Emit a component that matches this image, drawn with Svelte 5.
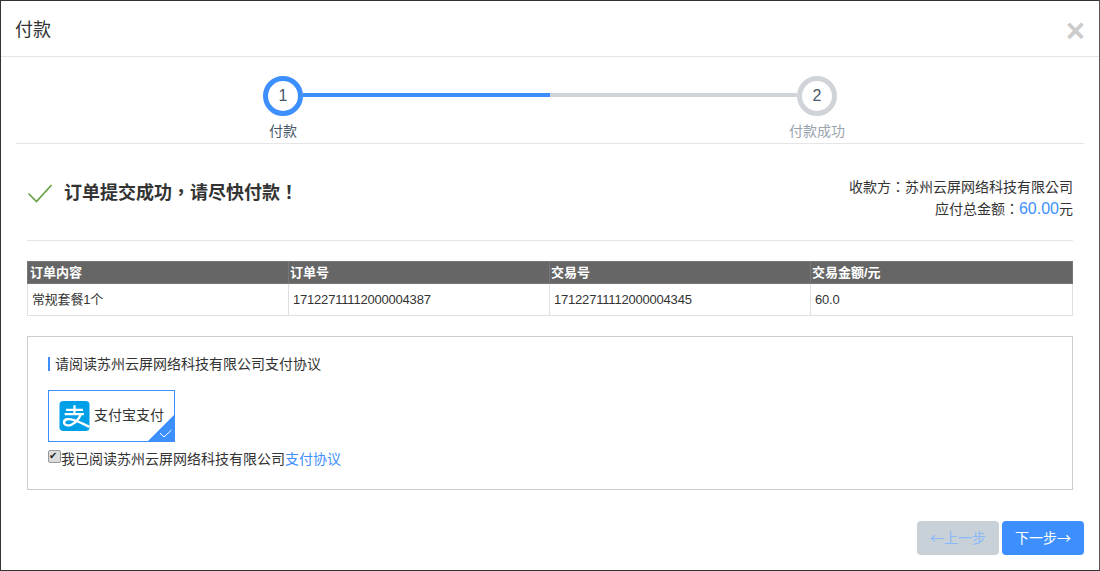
<script>
  const orders = [
    { content: "常规套餐1个", orderNo: "17122711112000004387", tradeNo: "17122711112000004345", amount: "60.0" }
  ];
</script>

<div class="modal">
  <header class="modal-head">
    <h4>付款</h4>
    <span class="close">×</span>
  </header>

  <div class="modal-body">
    <div class="steps">
      <div class="step active">
        <span class="circle">1</span>
        <span class="label">付款</span>
      </div>
      <div class="track"><div class="track-on"></div></div>
      <div class="step">
        <span class="circle">2</span>
        <span class="label">付款成功</span>
      </div>
    </div>

    <div class="content">
      <div class="summary">
        <div class="success">
          <svg width="26" height="20" viewBox="0 0 26 20">
            <path d="M1.5 10.5 L9.5 18.5 L24.5 2" fill="none" stroke="#67a143" stroke-width="1.7" />
          </svg>
          <strong>订单提交成功，请尽快付款！</strong>
        </div>
        <div class="payee">
          <div>收款方：苏州云屏网络科技有限公司</div>
          <div class="total">应付总金额：<em>60.00</em>元</div>
        </div>
      </div>

      <table>
        <thead>
          <tr>
            <th>订单内容</th>
            <th>订单号</th>
            <th>交易号</th>
            <th>交易金额/元</th>
          </tr>
        </thead>
        <tbody>
          {#each orders as o}
            <tr>
              <td>{o.content}</td>
              <td>{o.orderNo}</td>
              <td>{o.tradeNo}</td>
              <td>{o.amount}</td>
            </tr>
          {/each}
        </tbody>
      </table>

      <section class="agreement">
        <h5>请阅读苏州云屏网络科技有限公司支付协议</h5>
        <div class="pay-option">
          <svg class="ali" width="31" height="30" viewBox="0 0 32 32">
            <rect width="32" height="32" rx="4" fill="#00a0e9" />
            <path d="M7 9.5 H25 M16 4.5 V14 M5.5 14 H26" stroke="#fff" stroke-width="2.4" fill="none" />
            <path d="M23 14 C20 21 14 26.5 8.5 26 C4 25.5 3.5 20.5 8 19.5 C14 18.2 22 23 32 27.5" stroke="#fff" stroke-width="2.6" fill="none" />
          </svg>
          <span>支付宝支付</span>
          <svg class="corner" width="26" height="26" viewBox="0 0 26 26">
            <path d="M26 0 V26 H0 Z" fill="#3e8ffe" />
            <path d="M12 18 L16 22 L23.5 15" stroke="#fff" stroke-width="1" fill="none" />
          </svg>
        </div>
        <label class="agree">
          <input type="checkbox" checked />我已阅读苏州云屏网络科技有限公司<span class="link">支付协议</span>
        </label>
      </section>
    </div>

    <footer class="actions">
      <button class="btn prev">←上一步</button>
      <button class="btn next">下一步→</button>
    </footer>
  </div>
</div>

<style>
  :global(body) {
    margin: 0;
    background: #fff;
  }
  .modal {
    box-sizing: border-box;
    width: 1100px;
    height: 571px;
    border: 1px solid #333;
    border-right-color: #555;
    background: #fff;
    color: #333;
    font-family: "Liberation Sans", "Noto Sans CJK SC", sans-serif;
    font-size: 14px;
    overflow: hidden;
  }
  .modal-head {
    box-sizing: border-box;
    height: 56px;
    display: flex;
    align-items: center;
    justify-content: space-between;
    padding: 0 14px;
    border-bottom: 1px solid #e5e5e5;
  }
  h4 {
    margin: 0;
    font-size: 18px;
    font-weight: 400;
    color: #333;
    position: relative;
    top: -1px;
  }
  .close {
    font-size: 33px;
    font-weight: 700;
    line-height: 1;
    color: #ccc;
    position: relative;
    top: 2px;
  }
  .modal-body {
    padding: 0 15px;
  }
  .steps {
    box-sizing: border-box;
    height: 87px;
    padding-top: 19px;
    display: flex;
    justify-content: center;
    align-items: flex-start;
    border-bottom: 1px solid #e5e5e5;
  }
  .step {
    width: 40px;
    display: flex;
    flex-direction: column;
    align-items: center;
  }
  .circle {
    box-sizing: border-box;
    flex: none;
    width: 40px;
    height: 40px;
    border: 5px solid #d0d4d9;
    border-radius: 50%;
    display: flex;
    align-items: center;
    justify-content: center;
    font-size: 16px;
    color: #48576a;
  }
  .step.active .circle {
    border-color: #3e8ffe;
  }
  .label {
    margin-top: 6px;
    white-space: nowrap;
    color: #99a3ad;
    line-height: 18px;
  }
  .step.active .label {
    color: #48576a;
  }
  .track {
    width: 494px;
    height: 4px;
    margin-top: 17px;
    background: #d0d4d9;
  }
  .track-on {
    width: 50%;
    height: 100%;
    background: #3e8ffe;
  }
  .content {
    padding: 0 11px;
  }
  .summary {
    box-sizing: border-box;
    height: 97px;
    display: flex;
    justify-content: space-between;
    align-items: flex-start;
    border-bottom: 1px solid #e5e5e5;
    padding-top: 32px;
    font-family: "Liberation Sans", "Noto Sans CJK TC", sans-serif;
  }
  .success {
    display: flex;
    align-items: center;
    gap: 11px;
    padding-top: 5px;
  }
  .success strong {
    font-size: 18px;
    font-weight: 700;
    color: #333;
    line-height: 24px;
  }
  .payee {
    text-align: right;
    line-height: 22px;
  }
  .total em {
    font-style: normal;
    font-size: 16px;
    color: #3e8ffe;
  }
  table {
    width: 1046px;
    margin-top: 20px;
    border-collapse: collapse;
    table-layout: fixed;
  }
  th {
    box-sizing: border-box;
    height: 22px;
    padding: 0 1px;
    background: #666;
    color: #fff;
    font-size: 13px;
    font-weight: 700;
    line-height: 16px;
    text-align: left;
    border: 1px solid #777;
  }
  th:nth-child(1) {
    width: 261px;
    padding-left: 2px;
  }
  th:nth-child(2),
  th:nth-child(3) {
    width: 261px;
  }
  td {
    box-sizing: border-box;
    height: 32px;
    padding: 0 4px;
    border: 1px solid #e0e0e0;
    font-size: 13px;
    line-height: 16px;
    letter-spacing: -0.2px;
  }
  .agreement {
    box-sizing: border-box;
    height: 154px;
    margin-top: 20px;
    padding: 20px;
    border: 1px solid #ccc;
  }
  h5 {
    margin: 0 0 19px;
    padding-left: 5px;
    border-left: 2px solid #3e8ffe;
    font-size: 14px;
    font-weight: 400;
    line-height: 14px;
  }
  .pay-option {
    box-sizing: border-box;
    position: relative;
    width: 127px;
    height: 52px;
    display: flex;
    align-items: center;
    gap: 4px;
    padding-left: 10px;
    border: 1px solid #3e8ffe;
  }
  .pay-option span {
    margin-bottom: 5px;
  }
  .corner {
    position: absolute;
    right: 0;
    bottom: 0;
  }
  .agree {
    display: flex;
    align-items: center;
    height: 18px;
    margin-top: 7px;
  }
  .agree input {
    appearance: none;
    position: relative;
    box-sizing: border-box;
    width: 13px;
    height: 13px;
    margin: -4px 0 0 0;
    border: 1px solid #999;
    border-radius: 2px;
    background: #ddd;
  }
  .agree input::after {
    content: "✔";
    position: absolute;
    left: 0;
    top: -2px;
    font-size: 10px;
    line-height: 14px;
    color: #222;
  }
  .link {
    color: #3e8ffe;
  }
  .actions {
    display: flex;
    justify-content: flex-end;
    gap: 3px;
    margin-top: 31px;
  }
  .btn {
    width: 82px;
    height: 34px;
    border: none;
    border-radius: 4px;
    font-family: "Noto Sans CJK SC", sans-serif;
    font-size: 14px;
    padding: 0 0 2px;
  }
  .prev {
    background: #c8d0d8;
    color: #8ab8f8;
  }
  .next {
    background: #3e8ffe;
    color: #fff;
  }
</style>
